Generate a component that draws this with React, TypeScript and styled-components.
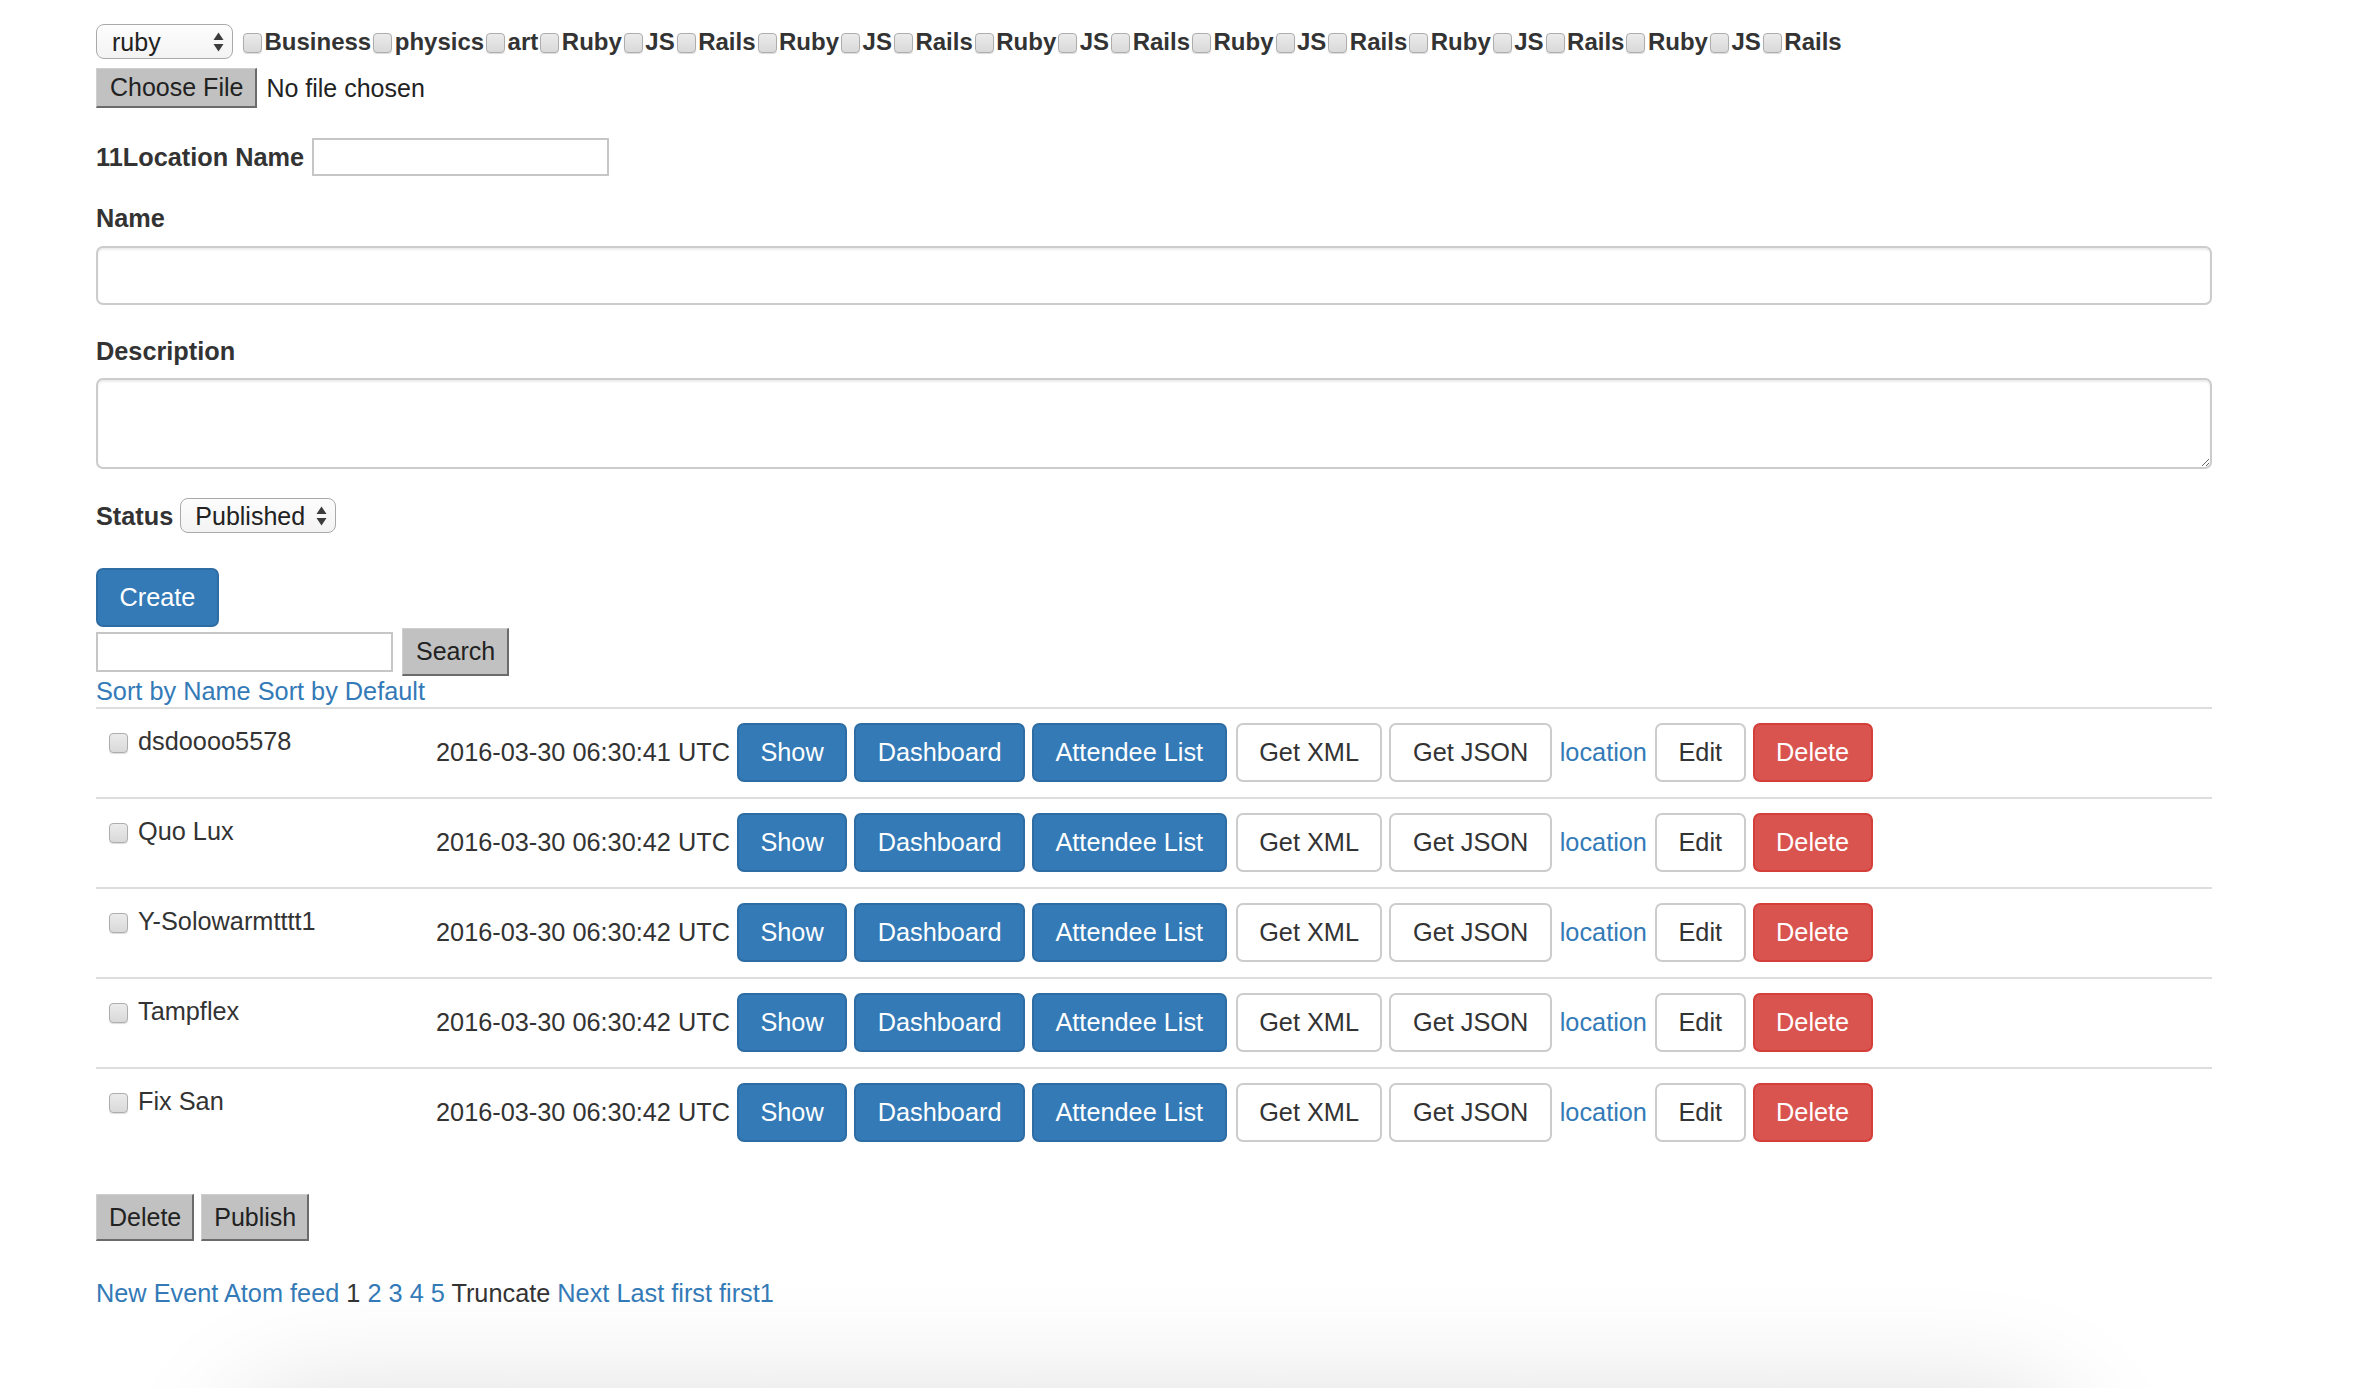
import React from 'react';
import styled, { createGlobalStyle, css } from 'styled-components';

const GlobalStyle = createGlobalStyle`
  html, body {
    margin: 0;
    padding: 0;
    background: #fff;
    overflow: hidden;
  }
  body {
    font-family: "Liberation Sans", Arial, Helvetica, sans-serif;
    font-size: 25.3px;
    line-height: 36px;
    color: #333;
  }
  * { box-sizing: border-box; }
`;

const Page = styled.div`
  width: 2116px;
  margin-left: 96px;
  padding-top: 24px;
`;

const TagRow = styled.div`
  display: flex;
  align-items: center;
  height: 35px;
`;

const FakeSelect = styled.div<{ $w: number; $pl: number }>`
  display: flex;
  align-items: center;
  justify-content: space-between;
  width: ${(p) => p.$w}px;
  height: 35px;
  padding: 0 7px 0 ${(p) => p.$pl}px;
  border: 1.5px solid #a9a9a9;
  border-radius: 8px;
  background: linear-gradient(#fdfdfd, #f3f3f3);
  font-size: 25px;
  color: #222;
  flex-shrink: 0;
`;

const Check = styled.span`
  display: inline-block;
  width: 19px;
  height: 20px;
  border: 1px solid #adadad;
  border-radius: 4px;
  background: linear-gradient(#ebebeb, #d9d9d9);
  box-shadow: 0 1px 1px rgba(0, 0, 0, 0.14);
  flex-shrink: 0;
`;

const TagCheck = styled(Check)`
  margin: 2px 2.5px 0 2px;
`;

const TagGap = styled.span`
  width: 8px;
`;

const TagLabel = styled.span`
  font-weight: bold;
  font-size: 24px;
  color: #333;
`;

const FileRow = styled.div`
  display: flex;
  align-items: center;
  margin-top: 9px;
  height: 40px;
`;

const NativeButton = styled.button<{ $h: number }>`
  height: ${(p) => p.$h}px;
  padding: 0 12px 0 13px;
  background: #c1c1c1;
  border-style: solid;
  border-width: 1px 2px 2px 1px;
  border-color: #cfcfcf #6b6b6b #6b6b6b #cfcfcf;
  border-radius: 0;
  font-family: "Liberation Sans", Arial, Helvetica, sans-serif;
  font-size: 25px;
  color: #222;
  line-height: 1;
`;

const FileStatus = styled.span`
  margin-left: 9px;
  font-size: 25px;
  color: #222;
`;

const InlineRow = styled.div<{ $mt: number; $h: number }>`
  display: flex;
  align-items: center;
  margin-top: ${(p) => p.$mt}px;
  height: ${(p) => p.$h}px;
`;

const BoldLabel = styled.label`
  font-weight: bold;
  color: #333;
`;

const PlainInput = styled.input<{ $w: number; $h: number }>`
  width: ${(p) => p.$w}px;
  height: ${(p) => p.$h}px;
  margin: 0;
  border: 2px solid #c6c6c6;
  border-radius: 0;
  background: #fff;
  font-size: 25px;
  padding: 0 6px;
`;

const LocationInput = styled(PlainInput)`
  margin-left: 8px;
`;

const BlockLabel = styled.label<{ $mt: number; $mb: number }>`
  display: block;
  margin-top: ${(p) => p.$mt}px;
  margin-bottom: ${(p) => p.$mb}px;
  font-weight: bold;
  color: #333;
`;

const fieldStyle = css`
  display: block;
  width: 100%;
  margin: 0;
  border: 2px solid #cccccc;
  border-radius: 7px;
  background: #fff;
  box-shadow: inset 0 2px 2px rgba(0, 0, 0, 0.075);
  font-family: "Liberation Sans", Arial, Helvetica, sans-serif;
  font-size: 25px;
  padding: 10px 21px;
`;

const FormInput = styled.input`
  ${fieldStyle}
  height: 59px;
`;

const FormTextarea = styled.textarea`
  ${fieldStyle}
  height: 91px;
  resize: vertical;
`;

const StatusSelectWrap = styled.div`
  margin-left: 7px;
`;

type Variant = 'primary' | 'default' | 'danger';

const variantStyles: Record<Variant, ReturnType<typeof css>> = {
  primary: css`
    background: #337ab7;
    border-color: #2e6da4;
    color: #fff;
  `,
  default: css`
    background: #fff;
    border-color: #cccccc;
    color: #333;
  `,
  danger: css`
    background: #d9534f;
    border-color: #d43f3a;
    color: #fff;
  `,
};

const Btn = styled.a<{ $variant: Variant }>`
  display: inline-block;
  height: 59px;
  padding: 10px 21.5px;
  line-height: 35px;
  font-size: 25.3px;
  border: 2px solid;
  border-radius: 7px;
  text-decoration: none;
  white-space: nowrap;
  cursor: pointer;
  ${(p) => variantStyles[p.$variant]}
`;

const XmlBtn = styled(Btn)`
  margin-left: 2px;
`;

const CreateWrap = styled.div`
  margin-top: 35px;
  height: 59px;
`;

const SearchRow = styled.div`
  display: flex;
  align-items: center;
  margin-top: 1px;
  height: 48px;
`;

const SearchInput = styled(PlainInput)`
  margin-right: 9px;
`;

const SortLinks = styled.div`
  line-height: 30px;
`;

const Link = styled.a`
  color: #337ab7;
  text-decoration: none;
`;

const Table = styled.div`
  margin-top: 1px;
`;

const Row = styled.div`
  display: grid;
  grid-template-columns: 340px 1fr;
  border-top: 2px solid #dddddd;
  padding: 14px 0 15px;
`;

const NameCell = styled.div`
  display: flex;
  align-items: flex-start;
  padding-left: 13px;
`;

const RowCheck = styled(Check)`
  margin-top: 10px;
  margin-right: 10px;
`;

const ActionCell = styled.div`
  display: flex;
  align-items: baseline;
  gap: 7px;
  white-space: nowrap;
`;

const LocLink = styled(Link)`
  margin: 0 1px;
`;

const BulkRow = styled.div`
  display: flex;
  gap: 7px;
  margin-top: 37px;
`;

const BulkButton = styled(NativeButton)`
  padding: 0 11px 0 12px;
`;

const FooterLinks = styled.div`
  margin-top: 34px;
  line-height: 36px;
`;

const PlainText = styled.span`
  color: #333;
`;

const ShadowPanel = styled.div`
  margin-top: 89px;
  margin-left: 140px;
  width: 1830px;
  height: 300px;
  background: #fff;
  border-radius: 60px;
  box-shadow: 0 0 120px rgba(0, 0, 0, 0.15);
`;

const UpDown = () => (
  <svg width="13" height="22" viewBox="0 0 13 22" aria-hidden="true">
    <path d="M6.5 1.5 L11.5 9 H1.5 Z" fill="#3c3c3c" />
    <path d="M6.5 20.5 L11.5 13 H1.5 Z" fill="#3c3c3c" />
  </svg>
);

const tags: string[] = ['Business', 'physics', 'art'];
for (let i = 0; i < 6; i++) tags.push('Ruby', 'JS', 'Rails');

const events = [
  { name: 'dsdoooo5578', date: '2016-03-30 06:30:41 UTC' },
  { name: 'Quo Lux', date: '2016-03-30 06:30:42 UTC' },
  { name: 'Y-Solowarmtttt1', date: '2016-03-30 06:30:42 UTC' },
  { name: 'Tampflex', date: '2016-03-30 06:30:42 UTC' },
  { name: 'Fix San', date: '2016-03-30 06:30:42 UTC' },
];

export default function App() {
  return (
    <>
      <GlobalStyle />
      <Page>
        <TagRow>
          <FakeSelect $w={137} $pl={15}>
            <span>ruby</span>
            <UpDown />
          </FakeSelect>
          <TagGap />
          {tags.map((t, i) => (
            <React.Fragment key={i}>
              <TagCheck />
              <TagLabel>{t}</TagLabel>
            </React.Fragment>
          ))}
        </TagRow>

        <FileRow>
          <NativeButton $h={40}>Choose File</NativeButton>
          <FileStatus>No file chosen</FileStatus>
        </FileRow>

        <InlineRow $mt={30} $h={38}>
          <BoldLabel>11Location Name</BoldLabel>
          <LocationInput $w={297} $h={38} />
        </InlineRow>

        <BlockLabel $mt={24} $mb={10}>Name</BlockLabel>
        <FormInput />

        <BlockLabel $mt={28} $mb={9}>Description</BlockLabel>
        <FormTextarea />

        <InlineRow $mt={29} $h={35}>
          <BoldLabel>Status</BoldLabel>
          <StatusSelectWrap>
            <FakeSelect $w={156} $pl={14}>
              <span>Published</span>
              <UpDown />
            </FakeSelect>
          </StatusSelectWrap>
        </InlineRow>

        <CreateWrap>
          <Btn $variant="primary">Create</Btn>
        </CreateWrap>

        <SearchRow>
          <SearchInput $w={297} $h={40} />
          <NativeButton $h={48}>Search</NativeButton>
        </SearchRow>

        <SortLinks>
          <Link>Sort by Name</Link> <Link>Sort by Default</Link>
        </SortLinks>

        <Table>
          {events.map((e) => (
            <Row key={e.name}>
              <NameCell>
                <RowCheck />
                <span>{e.name}</span>
              </NameCell>
              <ActionCell>
                <span>{e.date}</span>
                <Btn $variant="primary">Show</Btn>
                <Btn $variant="primary">Dashboard</Btn>
                <Btn $variant="primary">Attendee List</Btn>
                <XmlBtn $variant="default">Get XML</XmlBtn>
                <Btn $variant="default">Get JSON</Btn>
                <LocLink>location</LocLink>
                <Btn $variant="default">Edit</Btn>
                <Btn $variant="danger">Delete</Btn>
              </ActionCell>
            </Row>
          ))}
        </Table>

        <BulkRow>
          <BulkButton $h={47}>Delete</BulkButton>
          <BulkButton $h={47}>Publish</BulkButton>
        </BulkRow>

        <FooterLinks>
          <Link>New Event</Link> <Link>Atom feed</Link> <PlainText>1</PlainText>{' '}
          <Link>2</Link> <Link>3</Link> <Link>4</Link> <Link>5</Link>{' '}
          <PlainText>Truncate</PlainText> <Link>Next</Link> <Link>Last</Link>{' '}
          <Link>first</Link> <Link>first1</Link>
        </FooterLinks>

        <ShadowPanel />
      </Page>
    </>
  );
}
